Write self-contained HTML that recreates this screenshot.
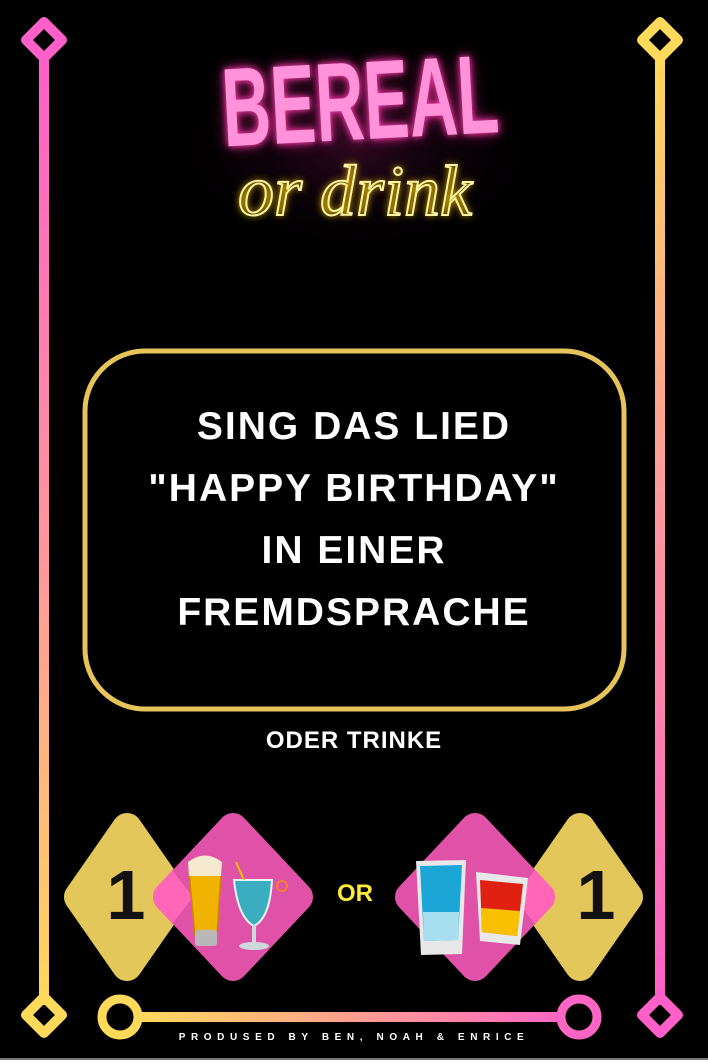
<!DOCTYPE html>
<html><head><meta charset="utf-8"><style>
html,body{margin:0;padding:0;background:#000;}
body{width:708px;height:1063px;position:relative;overflow:hidden;font-family:"Liberation Sans",sans-serif;}
.t{position:absolute;left:0;width:708px;text-align:center;color:#fff;font-weight:bold;}
.main{font-size:39px;letter-spacing:2px;line-height:1;}
</style></head><body>
<svg width="708" height="1063" style="position:absolute;left:0;top:0">
<defs>
<linearGradient id="gl" x1="0" y1="0" x2="0" y2="1"><stop offset="0" stop-color="#ff5fc8"/><stop offset="0.55" stop-color="#ff9a9a"/><stop offset="1" stop-color="#ffd95a"/></linearGradient>
<linearGradient id="gr" x1="0" y1="0" x2="0" y2="1"><stop offset="0" stop-color="#ffd95a"/><stop offset="0.45" stop-color="#ff9a9a"/><stop offset="1" stop-color="#ff5fc8"/></linearGradient>
<linearGradient id="gh" x1="0" y1="0" x2="1" y2="0"><stop offset="0" stop-color="#ffd95a"/><stop offset="1" stop-color="#ff66c4"/></linearGradient>
<radialGradient id="glow" cx="0.5" cy="0.5" r="0.5"><stop offset="0" stop-color="#4a0c34" stop-opacity="0.6"/><stop offset="1" stop-color="#000" stop-opacity="0"/></radialGradient>
<clipPath id="cl"><path d="M127 812 L193 897 L127 982 L61 897 Z"/></clipPath>
<clipPath id="cr"><path d="M580 812 L646 897 L580 982 L514 897 Z"/></clipPath>
</defs>
<ellipse cx="355" cy="150" rx="200" ry="110" fill="url(#glow)"/>
<rect x="39" y="55" width="10" height="950" fill="url(#gl)"/>
<rect x="655" y="55" width="10" height="950" fill="url(#gr)"/>
<path d="M44 22 L62 40 L44 58 L26 40 Z" fill="none" stroke="#ff5fc8" stroke-width="10" stroke-linejoin="round"/>
<path d="M660 22 L678 40 L660 58 L642 40 Z" fill="none" stroke="#ffd95a" stroke-width="10" stroke-linejoin="round"/>
<path d="M44 997 L62 1015 L44 1033 L26 1015 Z" fill="none" stroke="#ffd95a" stroke-width="10" stroke-linejoin="round"/>
<path d="M660 997 L678 1015 L660 1033 L642 1015 Z" fill="none" stroke="#ff5fc8" stroke-width="10" stroke-linejoin="round"/>
<rect x="135" y="1012" width="430" height="10" fill="url(#gh)"/>
<circle cx="120" cy="1017" r="18" fill="none" stroke="#ffd95a" stroke-width="9"/>
<circle cx="579" cy="1017" r="18" fill="none" stroke="#ff66c4" stroke-width="9"/>
<rect x="85" y="351" width="539" height="358" rx="60" fill="#000" stroke="#e6c45a" stroke-width="5"/>
<path d="M127 828 L175 897 L127 966 L79 897 Z" fill="#e3c75a" stroke="#e3c75a" stroke-width="30" stroke-linejoin="round"/>
<path d="M233 828 L298 897 L233 966 L168 897 Z" fill="#e052a8" stroke="#e052a8" stroke-width="30" stroke-linejoin="round"/>
<g clip-path="url(#cl)"><path d="M233 828 L298 897 L233 966 L168 897 Z" fill="#ff66b8" stroke="#ff66b8" stroke-width="30" stroke-linejoin="round"/></g>
<path d="M580 828 L628 897 L580 966 L532 897 Z" fill="#e3c75a" stroke="#e3c75a" stroke-width="30" stroke-linejoin="round"/>
<path d="M475 828 L540 897 L475 966 L410 897 Z" fill="#e052a8" stroke="#e052a8" stroke-width="30" stroke-linejoin="round"/>
<g clip-path="url(#cr)"><path d="M475 828 L540 897 L475 966 L410 897 Z" fill="#ff66b8" stroke="#ff66b8" stroke-width="30" stroke-linejoin="round"/></g>
<path d="M189 872 L221 872 L217 935 L195 935 Z" fill="#f0b400" stroke="#c98a00" stroke-width="1.5"/>
<path d="M188 862 Q205 849 222 862 L221 876 L189 876 Z" fill="#f5e9cf"/>
<rect x="195" y="930" width="22" height="16" rx="3" fill="#b8b8b8"/>
<path d="M234 880 L272 880 Q270 918 254 926 Q238 918 234 880 Z" fill="#3aaec0" stroke="#e6f6f8" stroke-width="2"/>
<rect x="252" y="925" width="4" height="19" fill="#cfd8dc"/>
<ellipse cx="254" cy="946" rx="15" ry="4" fill="#cfd8dc"/>
<path d="M244 880 L236 862" stroke="#f0c000" stroke-width="2"/>
<circle cx="282" cy="886" r="5" fill="none" stroke="#f08030" stroke-width="2"/>
<path d="M416 861 L466 860 L462 954 L421 955 Z" fill="#e8e8e8"/>
<path d="M420 866 L462 865 L458 940 L424 941 Z" fill="#1ca6d8"/>
<path d="M423 912 L459 912 L458 940 L424 941 Z" fill="#a8dff0"/>
<path d="M476 872 L528 878 L520 945 L480 941 Z" fill="#e8e8e8"/>
<path d="M480 880 L523 884 L517 936 L482 932 Z" fill="#e02010"/>
<path d="M481 908 L520 911 L517 936 L482 932 Z" fill="#f8c000"/>
</svg>
<div style="position:absolute;left:138px;top:46px;width:420px;text-align:center;transform:rotate(-3deg) scaleX(0.6);font-weight:bold;font-size:112px;line-height:1;color:#ff92d8;text-shadow:0 0 8px #ff3fb0,0 0 18px #c0207a;">BEREAL</div>
<div style="position:absolute;left:205px;top:155px;width:300px;text-align:center;font-family:'Liberation Serif',serif;font-style:italic;font-size:72px;line-height:1;color:transparent;-webkit-text-stroke:2px #fff3a0;text-shadow:0 0 8px #ffd000;">or drink</div>
<div class="t main" style="top:407px">SING DAS LIED</div>
<div class="t main" style="top:469px">"HAPPY BIRTHDAY"</div>
<div class="t main" style="top:531px">IN EINER</div>
<div class="t main" style="top:593px">FREMDSPRACHE</div>
<div class="t" style="top:727px;font-size:24px;letter-spacing:1px">ODER TRINKE</div>
<div style="position:absolute;left:100px;top:860px;width:52px;text-align:center;font-weight:bold;font-size:70px;line-height:1;color:#111">1</div>
<div style="position:absolute;left:570px;top:860px;width:52px;text-align:center;font-weight:bold;font-size:70px;line-height:1;color:#111">1</div>
<div style="position:absolute;left:330px;top:882px;width:50px;text-align:center;font-weight:bold;font-size:24px;line-height:1;color:#ffe93a">OR</div>
<div class="t" style="top:1033px;font-size:10px;letter-spacing:5.6px;line-height:1">PRODUSED BY BEN, NOAH &amp; ENRICE</div>
<div style="position:absolute;left:0;top:1058px;width:708px;height:2px;background:#777"></div>
<div style="position:absolute;left:0;top:1060px;width:708px;height:3px;background:#fff"></div>
</body></html>
